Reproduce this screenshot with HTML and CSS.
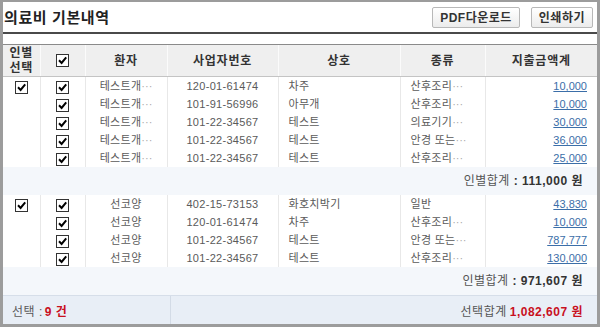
FILE: index.html
```html
<!DOCTYPE html>
<html lang="ko">
<head>
<meta charset="utf-8">
<link rel="stylesheet" href="styles.css">
</head>
<body>
<div class="frame">
  <div class="titlebar">
    <h1 class="title">의료비 기본내역</h1>
    <div class="btns">
      <button class="btn">PDF다운로드</button>
      <button class="btn">인쇄하기</button>
    </div>
  </div>
  <div class="rule"></div>
  <table class="grid">
    <colgroup>
      <col class="c1"><col class="c2"><col class="c3"><col class="c4"><col class="c5"><col class="c6"><col class="c7">
    </colgroup>
    <thead>
      <tr>
        <th class="h1c">인별<br>선택</th>
        <th><svg class="cb" viewBox="0 0 13 13"><rect x="0.5" y="0.5" width="12" height="12" fill="#fff" stroke="#333"/><path d="M3 6.3l2.6 2.6 4.6-5.6" fill="none" stroke="#000" stroke-width="2"/></svg></th>
        <th>환자</th>
        <th>사업자번호</th>
        <th>상호</th>
        <th>종류</th>
        <th>지출금액계</th>
      </tr>
    </thead>
    <tbody>
      <tr>
        <td class="ctr"><svg class="cb" viewBox="0 0 13 13"><rect x="0.5" y="0.5" width="12" height="12" fill="#fff" stroke="#333"/><path d="M3 6.3l2.6 2.6 4.6-5.6" fill="none" stroke="#000" stroke-width="2"/></svg></td>
        <td class="ctr"><svg class="cb" viewBox="0 0 13 13"><rect x="0.5" y="0.5" width="12" height="12" fill="#fff" stroke="#333"/><path d="M3 6.3l2.6 2.6 4.6-5.6" fill="none" stroke="#000" stroke-width="2"/></svg></td>
        <td class="ctr">테스트개<span class="dots">···</span></td>
        <td class="ctr">120-01-61474</td>
        <td class="lft">차주</td>
        <td class="lft">산후조리<span class="dots">···</span></td>
        <td class="amt"><a href="#">10,000</a></td>
      </tr>
      <tr>
        <td></td>
        <td class="ctr"><svg class="cb" viewBox="0 0 13 13"><rect x="0.5" y="0.5" width="12" height="12" fill="#fff" stroke="#333"/><path d="M3 6.3l2.6 2.6 4.6-5.6" fill="none" stroke="#000" stroke-width="2"/></svg></td>
        <td class="ctr">테스트개<span class="dots">···</span></td>
        <td class="ctr">101-91-56996</td>
        <td class="lft">아무개</td>
        <td class="lft">산후조리<span class="dots">···</span></td>
        <td class="amt"><a href="#">10,000</a></td>
      </tr>
      <tr>
        <td></td>
        <td class="ctr"><svg class="cb" viewBox="0 0 13 13"><rect x="0.5" y="0.5" width="12" height="12" fill="#fff" stroke="#333"/><path d="M3 6.3l2.6 2.6 4.6-5.6" fill="none" stroke="#000" stroke-width="2"/></svg></td>
        <td class="ctr">테스트개<span class="dots">···</span></td>
        <td class="ctr">101-22-34567</td>
        <td class="lft">테스트</td>
        <td class="lft">의료기기<span class="dots">···</span></td>
        <td class="amt"><a href="#">30,000</a></td>
      </tr>
      <tr>
        <td></td>
        <td class="ctr"><svg class="cb" viewBox="0 0 13 13"><rect x="0.5" y="0.5" width="12" height="12" fill="#fff" stroke="#333"/><path d="M3 6.3l2.6 2.6 4.6-5.6" fill="none" stroke="#000" stroke-width="2"/></svg></td>
        <td class="ctr">테스트개<span class="dots">···</span></td>
        <td class="ctr">101-22-34567</td>
        <td class="lft">테스트</td>
        <td class="lft">안경 또는<span class="dots">···</span></td>
        <td class="amt"><a href="#">36,000</a></td>
      </tr>
      <tr>
        <td></td>
        <td class="ctr"><svg class="cb" viewBox="0 0 13 13"><rect x="0.5" y="0.5" width="12" height="12" fill="#fff" stroke="#333"/><path d="M3 6.3l2.6 2.6 4.6-5.6" fill="none" stroke="#000" stroke-width="2"/></svg></td>
        <td class="ctr">테스트개<span class="dots">···</span></td>
        <td class="ctr">101-22-34567</td>
        <td class="lft">테스트</td>
        <td class="lft">산후조리<span class="dots">···</span></td>
        <td class="amt"><a href="#">25,000</a></td>
      </tr>
      <tr class="sub">
        <td colspan="7"><span class="lbl">인별합계</span> <b>: 111,000 원</b></td>
      </tr>
      <tr>
        <td class="ctr"><svg class="cb" viewBox="0 0 13 13"><rect x="0.5" y="0.5" width="12" height="12" fill="#fff" stroke="#333"/><path d="M3 6.3l2.6 2.6 4.6-5.6" fill="none" stroke="#000" stroke-width="2"/></svg></td>
        <td class="ctr"><svg class="cb" viewBox="0 0 13 13"><rect x="0.5" y="0.5" width="12" height="12" fill="#fff" stroke="#333"/><path d="M3 6.3l2.6 2.6 4.6-5.6" fill="none" stroke="#000" stroke-width="2"/></svg></td>
        <td class="ctr">선코양</td>
        <td class="ctr">402-15-73153</td>
        <td class="lft">화호치박기</td>
        <td class="lft">일반</td>
        <td class="amt"><a href="#">43,830</a></td>
      </tr>
      <tr>
        <td></td>
        <td class="ctr"><svg class="cb" viewBox="0 0 13 13"><rect x="0.5" y="0.5" width="12" height="12" fill="#fff" stroke="#333"/><path d="M3 6.3l2.6 2.6 4.6-5.6" fill="none" stroke="#000" stroke-width="2"/></svg></td>
        <td class="ctr">선코양</td>
        <td class="ctr">120-01-61474</td>
        <td class="lft">차주</td>
        <td class="lft">산후조리<span class="dots">···</span></td>
        <td class="amt"><a href="#">10,000</a></td>
      </tr>
      <tr>
        <td></td>
        <td class="ctr"><svg class="cb" viewBox="0 0 13 13"><rect x="0.5" y="0.5" width="12" height="12" fill="#fff" stroke="#333"/><path d="M3 6.3l2.6 2.6 4.6-5.6" fill="none" stroke="#000" stroke-width="2"/></svg></td>
        <td class="ctr">선코양</td>
        <td class="ctr">101-22-34567</td>
        <td class="lft">테스트</td>
        <td class="lft">안경 또는<span class="dots">···</span></td>
        <td class="amt"><a href="#">787,777</a></td>
      </tr>
      <tr>
        <td></td>
        <td class="ctr"><svg class="cb" viewBox="0 0 13 13"><rect x="0.5" y="0.5" width="12" height="12" fill="#fff" stroke="#333"/><path d="M3 6.3l2.6 2.6 4.6-5.6" fill="none" stroke="#000" stroke-width="2"/></svg></td>
        <td class="ctr">선코양</td>
        <td class="ctr">101-22-34567</td>
        <td class="lft">테스트</td>
        <td class="lft">산후조리<span class="dots">···</span></td>
        <td class="amt"><a href="#">130,000</a></td>
      </tr>
      <tr class="sub">
        <td colspan="7"><span class="lbl">인별합계</span> <b>: 971,607 원</b></td>
      </tr>
    </tbody>
  </table>
  <div class="footer">
    <div class="fl">선택 : <b class="red">9 건</b></div>
    <div class="fr"><span class="lbl">선택합계</span> <b class="red">1,082,607 원</b></div>
  </div>
</div>
</body>
</html>
```

FILE: styles.css
```css
html, body {
  margin: 0;
  padding: 0;
  background: #fff;
}
body {
  font-family: "Liberation Sans", "Noto Sans CJK KR", sans-serif;
  font-size: 11px;
  color: #5a5a5a;
}
.frame {
  width: 594px;
  height: 322px;
  border-style: solid;
  border-color: #9c9c9c;
  border-width: 2px 3px 3px 3px;
  display: flex;
  flex-direction: column;
  overflow: hidden;
  background: #fff;
}
.titlebar {
  height: 30px;
  display: flex;
  align-items: center;
  justify-content: space-between;
  padding: 0 4px 0 1px;
}
.title {
  margin: 0;
  font-size: 15px;
  font-weight: bold;
  color: #222;
  letter-spacing: 0.6px;
  font-family: "Noto Sans CJK KR", sans-serif;
  line-height: 20px;
}
.btns {
  display: flex;
  gap: 11px;
  padding-top: 1px;
}
.btn {
  height: 21px;
  padding: 0 7px;
  border: 1px solid #b8b8b8;
  border-radius: 2px;
  background: linear-gradient(#ffffff, #ececec);
  font-family: "Liberation Sans", "Noto Sans CJK KR", sans-serif;
  font-size: 12px;
  font-weight: bold;
  color: #333;
  letter-spacing: 0.5px;
  line-height: 18px;
}
.rule {
  border-top: 2px solid #4a4a4a;
  border-bottom: 1px solid #8a8a8a;
  height: 10px;
}
.grid {
  width: 594px;
  table-layout: fixed;
  border-collapse: collapse;
}
.c1 { width: 37px; }
.c2 { width: 45px; }
.c3 { width: 82px; }
.c4 { width: 111px; }
.c5 { width: 122px; }
.c6 { width: 85px; }
.c7 { width: 112px; }
th {
  height: 31px;
  padding: 0;
  background: #efefef;
  color: #333;
  font-size: 12px;
  font-weight: bold;
  letter-spacing: 0.8px;
  border-left: 1px solid #fbfbfb;
  border-bottom: 1px solid #c4c4c4;
  text-align: center;
  line-height: 14px;
}
th:first-child { border-left: none; }
.h1c { line-height: 15px; }
td {
  height: 18px;
  padding: 0;
  line-height: 18px;
  border-left: 1px solid #e8e8e8;
  white-space: nowrap;
  overflow: hidden;
  letter-spacing: 0.3px;
}
td:first-child { border-left: none; }
.ctr { text-align: center; }
.lft { text-align: left; padding-left: 10px; }
.amt { text-align: right; padding-right: 10px; }
.amt a {
  color: #3b6ea8;
  text-decoration: underline;
  letter-spacing: 0;
}
.dots { color: #aaa; letter-spacing: 0; }
.cb {
  width: 13px;
  height: 13px;
  vertical-align: middle;
  display: inline-block;
}
th .cb { margin-top: -2px; }
.sub td {
  height: 28px;
  background: #f4f7fb;
  border-left: none;
  text-align: right;
  padding-right: 14px;
  font-size: 12px;
  letter-spacing: 0.5px;
}
.sub b { color: #333; }
.lbl { color: #555; }
.footer {
  flex: 1;
  display: flex;
  background: #e8eef6;
  border-top: 1px solid #d6dee9;
  font-size: 12px;
  letter-spacing: 0.5px;
}
.fl {
  width: 158px;
  padding-left: 9px;
  display: flex;
  align-items: center;
  border-right: 1px solid #d3dbe6;
}
.fr {
  flex: 1;
  display: flex;
  align-items: center;
  justify-content: flex-end;
  padding-right: 14px;
}
.red { color: #c8101e; margin-left: 3px; }
.fl .red { margin-left: 2px; }
```
